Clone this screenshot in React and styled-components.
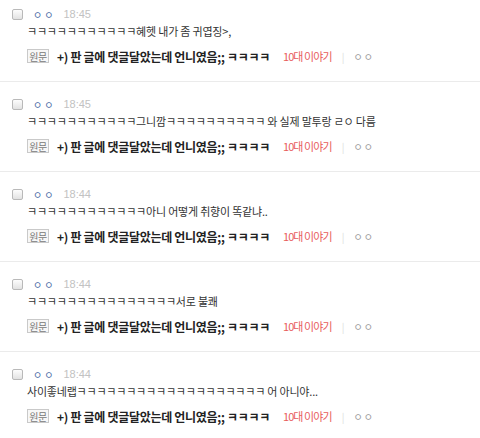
import React from 'react';
import styled, { createGlobalStyle } from 'styled-components';

const comments = [
  { time: '18:45', text: 'ㅋㅋㅋㅋㅋㅋㅋㅋㅋㅋㅋ혜헷 내가 좀 귀엽징>,' },
  { time: '18:45', text: 'ㅋㅋㅋㅋㅋㅋㅋㅋㅋㅋㅋ그니깜ㅋㅋㅋㅋㅋㅋㅋㅋㅋㅋ 와 실제 말투랑 ㄹㅇ 다름' },
  { time: '18:44', text: 'ㅋㅋㅋㅋㅋㅋㅋㅋㅋㅋㅋㅋ아니 어떻게 취향이 똑같냐..' },
  { time: '18:44', text: 'ㅋㅋㅋㅋㅋㅋㅋㅋㅋㅋㅋㅋㅋㅋㅋ서로 불쾌' },
  { time: '18:44', text: '사이좋네랩ㅋㅋㅋㅋㅋㅋㅋㅋㅋㅋㅋㅋㅋㅋㅋㅋㅋㅋㅋ 어 아니야...' },
];

const GlobalStyle = createGlobalStyle`
  body {
    margin: 0;
    background: #fff;
    font-family: "Noto Sans CJK KR", "Noto Sans", sans-serif;
    overflow: hidden;
  }
`;

const List = styled.ul`
  list-style: none;
  margin: -8px 0 0;
  padding: 0;
  width: 480px;
`;

const Item = styled.li`
  padding: 15px 0 17px;
  border-bottom: 1px solid #ebebeb;
`;

const Meta = styled.div`
  display: flex;
  align-items: center;
  height: 14px;
  padding-left: 12px;
`;

const Check = styled.span`
  width: 9px;
  height: 9px;
  border: 1px solid #b9b9b9;
  border-radius: 2px;
  background: linear-gradient(#fdfdfd, #e2e2e2);
`;

const Nick = styled.span`
  margin-left: 10px;
  font-size: 10px;
  color: #4a6aa5;
  letter-spacing: 2px;
`;

const Time = styled.span`
  margin-left: 8px;
  font-family: "Liberation Sans", Arial, sans-serif;
  font-size: 11px;
  color: #c2c2c2;
`;

const Text = styled.p`
  margin: 2px 0 0 27px;
  height: 16px;
  line-height: 16px;
  font-size: 11px;
  color: #333;
  letter-spacing: -0.2px;
  white-space: nowrap;
`;

const Source = styled.div`
  display: flex;
  align-items: center;
  height: 16px;
  margin: 9px 0 0 27px;
  font-size: 11px;
`;

const Tag = styled.span`
  display: inline-flex;
  align-items: center;
  justify-content: center;
  width: 20px;
  height: 12px;
  border: 1px solid #c9c9c9;
  background: #f7f7f7;
  color: #777;
  font-size: 10px;
  letter-spacing: -0.5px;
`;

const Title = styled.span`
  margin-left: 8px;
  font-size: 12px;
  font-weight: bold;
  color: #222;
  letter-spacing: -0.3px;
`;

const Board = styled.span`
  margin-left: 13px;
  color: #e85c5c;
  letter-spacing: -0.9px;
`;

const Bar = styled.span`
  margin: 0 9px 0 10px;
  color: #ddd;
  font-size: 10px;
`;

const Writer = styled.span`
  color: #999;
  letter-spacing: 1px;
  font-size: 10px;
`;

const App = () => (
  <>
    <GlobalStyle />
    <List>
      {comments.map((c, i) => (
        <Item key={i}>
          <Meta>
            <Check />
            <Nick>ㅇㅇ</Nick>
            <Time>{c.time}</Time>
          </Meta>
          <Text>{c.text}</Text>
          <Source>
            <Tag>원문</Tag>
            <Title>+) 판 글에 댓글달았는데 언니였음;; ㅋㅋㅋㅋ</Title>
            <Board>10대 이야기</Board>
            <Bar>|</Bar>
            <Writer>ㅇㅇ</Writer>
          </Source>
        </Item>
      ))}
    </List>
  </>
);

export default App;
